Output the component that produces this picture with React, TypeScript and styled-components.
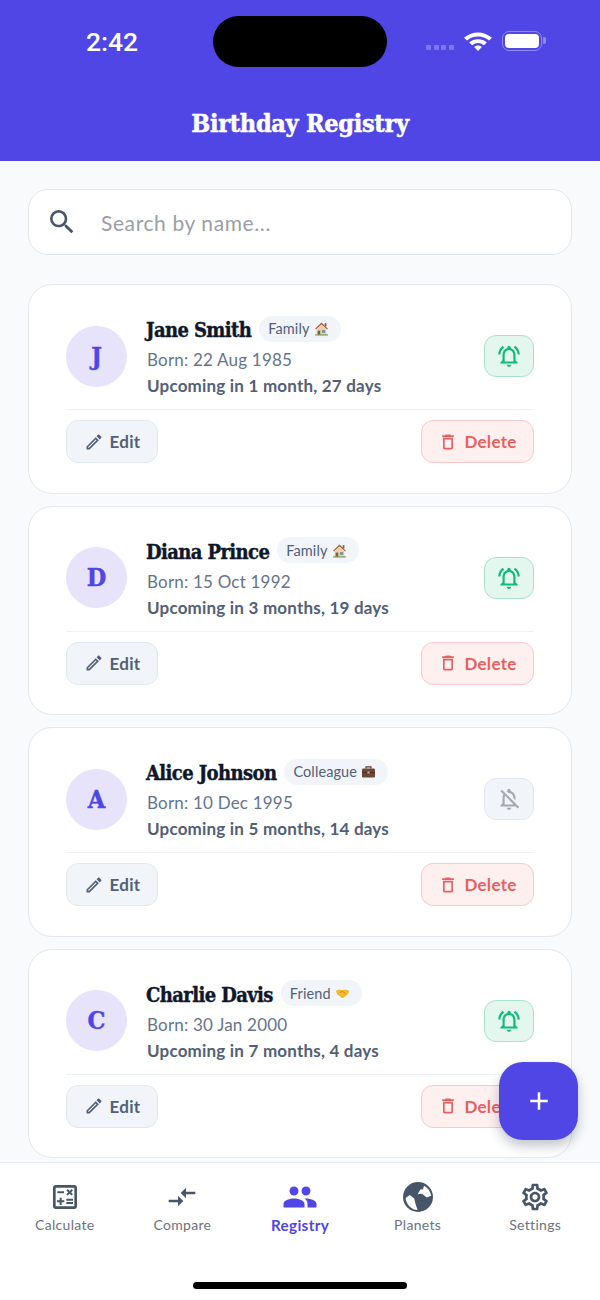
import React from 'react';
import styled, { createGlobalStyle } from 'styled-components';
import {
  MdAdd,
  MdCompareArrows,
  MdOutlineCalculate,
  MdOutlineDelete,
  MdOutlineEdit,
  MdOutlineNotificationsActive,
  MdOutlineNotificationsOff,
  MdOutlineSettings,
  MdPeople,
  MdSearch,
} from 'react-icons/md';

const HouseEmoji = () => (
  <svg width="15" height="15" viewBox="0 0 14 14">
    <path d="M7 1.5 1 7.2l.8.8L7 3.2 12.2 8l.8-.8z" fill="#a5603a" />
    <rect x="10" y="2" width="1.6" height="3" fill="#8d5a3c" />
    <path d="M2.5 7.4 7 3.4l4.5 4V13h-9z" fill="#e8d2ae" />
    <rect x="3.4" y="9" width="2.4" height="4" fill="#7d5a44" />
    <rect x="7.4" y="8.6" width="3" height="2.4" fill="#6f8fa8" />
    <rect x="1" y="12.4" width="12" height="1.2" fill="#7fa05e" />
  </svg>
);

const BriefcaseEmoji = () => (
  <svg width="15" height="15" viewBox="0 0 15 14">
    <path d="M5 4V2.4h5V4" fill="none" stroke="#5b3a2c" strokeWidth="1.2" />
    <rect x="1" y="4" width="13" height="9" rx="1.2" fill="#6d4636" />
    <rect x="1" y="7.6" width="13" height="1" fill="#4a2d22" />
    <rect x="6.4" y="7" width="2.2" height="2" fill="#d9b48a" />
  </svg>
);

const HandshakeEmoji = () => (
  <svg width="15" height="15" viewBox="0 0 15 14">
    <path d="M.8 4.2 4.4 3l3 .8L10.6 3l3.6 1.2-1 3.4L8 11.4H7L2 7.6z" fill="#f5b82e" />
    <path d="M5 6.2 7.4 4.6l3.2 2.6" fill="none" stroke="#c98a12" strokeWidth="1" />
  </svg>
);

const WifiIcon = () => (
  <svg width="28" height="20" viewBox="0 0 28 22" preserveAspectRatio="none">
    <path d="M0 7.4a20 20 0 0 1 28 0l-3 3a15.8 15.8 0 0 0-22 0z" fill="#fff" />
    <path d="M5.2 12.6a12.6 12.6 0 0 1 17.6 0l-3 3a8.4 8.4 0 0 0-11.6 0z" fill="#fff" />
    <path d="M10.2 17.6a5.4 5.4 0 0 1 7.6 0L14 22z" fill="#fff" />
  </svg>
);

const GlobeIcon = () => (
  <svg width="30" height="30" viewBox="3 3 30 30">
    <circle cx="18" cy="18" r="15" fill="#475569" />
    <path d="M5.6 19 9.8 16l4.4 3.4 1.2 5.2 2.2 6.4C11 30.6 6.2 25.6 5.6 19z" fill="#fff" />
    <path d="M24 6.8c3.8 2 6.4 5.6 7.2 10l-4.6 1.6-4.4-3.6-4.6.4 2.8-4.6 2.6-.4z" fill="#fff" />
  </svg>
);

const contacts = [
  { name: 'Jane Smith', tag: 'Family', emoji: <HouseEmoji />, born: '22 Aug 1985', upcoming: '1 month, 27 days', alert: true },
  { name: 'Diana Prince', tag: 'Family', emoji: <HouseEmoji />, born: '15 Oct 1992', upcoming: '3 months, 19 days', alert: true },
  { name: 'Alice Johnson', tag: 'Colleague', emoji: <BriefcaseEmoji />, born: '10 Dec 1995', upcoming: '5 months, 14 days', alert: false },
  { name: 'Charlie Davis', tag: 'Friend', emoji: <HandshakeEmoji />, born: '30 Jan 2000', upcoming: '7 months, 4 days', alert: true },
];

const tabs = [
  { label: 'Calculate', icon: <MdOutlineCalculate size={32} /> },
  { label: 'Compare', icon: <MdCompareArrows size={32} /> },
  { label: 'Registry', icon: <MdPeople size={36} />, active: true },
  { label: 'Planets', icon: <GlobeIcon /> },
  { label: 'Settings', icon: <MdOutlineSettings size={32} /> },
];

const App = () => {
  return (
    <Screen>
      <GlobalStyle />
      <Header>
        <StatusBar>
          <Time>2:42</Time>
          <Island />
          <StatusIcons>
            <SignalDots>
              <i />
              <i />
              <i />
              <i />
            </SignalDots>
            <WifiIcon />
            <Battery>
              <BatteryFill />
            </Battery>
          </StatusIcons>
        </StatusBar>
        <Title>Birthday Registry</Title>
      </Header>

      <Main>
        <SearchBox>
          <MdSearch size={32} color="#475569" />
          <SearchText>Search by name...</SearchText>
        </SearchBox>
        <CardList>
          {contacts.map((c) => (
            <Card key={c.name}>
              <CardTop>
                <Avatar>{c.name[0]}</Avatar>
                <Info>
                  <NameRow>
                    <Name>{c.name}</Name>
                    <Tag>
                      {c.tag} {c.emoji}
                    </Tag>
                  </NameRow>
                  <Born>Born: {c.born}</Born>
                  <Upcoming>Upcoming in {c.upcoming}</Upcoming>
                </Info>
                <BellButton $on={c.alert}>
                  {c.alert ? <MdOutlineNotificationsActive size={26} /> : <MdOutlineNotificationsOff size={26} />}
                </BellButton>
              </CardTop>
              <Actions>
                <EditButton>
                  <MdOutlineEdit size={20} />
                  Edit
                </EditButton>
                <DeleteButton>
                  <MdOutlineDelete size={20} />
                  Delete
                </DeleteButton>
              </Actions>
            </Card>
          ))}
        </CardList>
        <Fab>
          <MdAdd size={30} />
        </Fab>
      </Main>

      <TabBar>
        <Tabs>
          {tabs.map((t) => (
            <Tab key={t.label} $active={t.active}>
              <TabIcon>{t.icon}</TabIcon>
              <span>{t.label}</span>
            </Tab>
          ))}
        </Tabs>
        <HomeIndicator />
      </TabBar>
    </Screen>
  );
};

export default App;

const GlobalStyle = createGlobalStyle`
  html, body {
    margin: 0;
    padding: 0;
    background: #f8fafc;
  }
`;

const Screen = styled.div`
  width: 600px;
  height: 1300px;
  display: flex;
  flex-direction: column;
  overflow: hidden;
  background: #f8fafc;
  font-family: Lato, 'Liberation Sans', sans-serif;
`;

const Header = styled.header`
  height: 161px;
  flex: none;
  box-sizing: border-box;
  padding-top: 16px;
  background: #4f46e5;
  color: #fff;
`;

const StatusBar = styled.div`
  display: grid;
  grid-template-columns: 213px 174px 213px;
  height: 51px;
`;

const Time = styled.div`
  padding-left: 86px;
  font: 500 26.5px/51px Roboto, sans-serif;
`;

const Island = styled.div`
  height: 51px;
  border-radius: 26px;
  background: #000;
`;

const StatusIcons = styled.div`
  display: flex;
  align-items: center;
  padding-left: 39px;
  height: 49px;
`;

const SignalDots = styled.div`
  display: flex;
  gap: 2.5px;
  margin-top: 13px;
  margin-right: 10px;

  i {
    width: 5px;
    height: 5px;
    border-radius: 1px;
    background: #7d76ec;
  }
`;

const Battery = styled.div`
  position: relative;
  width: 40px;
  height: 20px;
  margin-left: 10px;
  box-sizing: border-box;
  border: 1.5px solid #8f8aef;
  border-radius: 7px;
  padding: 2px;

  &::after {
    content: '';
    position: absolute;
    right: -5px;
    top: 5px;
    width: 2.5px;
    height: 7px;
    border-radius: 0 2px 2px 0;
    background: #8f8aef;
  }
`;

const BatteryFill = styled.div`
  height: 100%;
  border-radius: 4px;
  background: #fff;
`;

const Title = styled.h1`
  margin: 40px 0 0;
  text-align: center;
  font: 700 25px/34px 'DejaVu Serif Condensed', 'DejaVu Serif', serif;
  letter-spacing: -0.3px;
  -webkit-text-stroke: 0.5px #fff;
`;

const Main = styled.main`
  position: relative;
  flex: 1;
  min-height: 0;
  overflow: hidden;
  padding: 28px 28px 0;
`;

const SearchBox = styled.div`
  height: 66px;
  box-sizing: border-box;
  display: flex;
  align-items: center;
  gap: 23px;
  padding: 0 17px;
  background: #fff;
  border: 1px solid #e2e8f0;
  border-radius: 20px;
`;

const SearchText = styled.span`
  font-size: 21px;
  letter-spacing: 0.6px;
  color: #9a9ea6;
`;

const CardList = styled.div`
  display: flex;
  flex-direction: column;
  gap: 12px;
  margin-top: 29px;
`;

const Card = styled.article`
  height: 209.6px;
  flex: none;
  box-sizing: border-box;
  padding: 26px 37px 0;
  background: #fff;
  border: 1px solid #e2e8f0;
  border-radius: 24px;
`;

const CardTop = styled.div`
  display: flex;
  align-items: center;
  height: 99px;
  box-sizing: border-box;
  padding-bottom: 8px;
  border-bottom: 1px solid #eef1f5;
`;

const Avatar = styled.div`
  width: 61px;
  height: 61px;
  flex: none;
  display: flex;
  align-items: center;
  justify-content: center;
  border-radius: 50%;
  background: #e6e3fb;
  color: #4f46e5;
  font: 700 25px 'DejaVu Serif Condensed', 'DejaVu Serif', serif;
  -webkit-text-stroke: 0.4px #4f46e5;
`;

const Info = styled.div`
  flex: 1;
  margin-left: 20px;
  margin-top: 2px;
  display: flex;
  flex-direction: column;
`;

const NameRow = styled.div`
  display: flex;
  align-items: center;
  gap: 8px;
  margin-left: -1px;
  height: 28px;
`;

const Name = styled.div`
  font: 700 20px/28px 'DejaVu Serif Condensed', 'DejaVu Serif', serif;
  letter-spacing: -0.6px;
  -webkit-text-stroke: 0.4px #0f172a;
  color: #0f172a;
`;

const Tag = styled.div`
  display: flex;
  align-items: center;
  gap: 4px;
  height: 26px;
  padding: 0 12px 0 9px;
  margin-top: -3px;
  border-radius: 13px;
  background: #f1f5f9;
  color: #526077;
  font-size: 14.5px;
  letter-spacing: 0.1px;
`;

const Born = styled.div`
  margin-top: 4px;
  font-size: 17px;
  line-height: 24px;
  letter-spacing: 0.2px;
  color: #64748b;
`;

const Upcoming = styled.div`
  margin-top: 2px;
  font-size: 17px;
  line-height: 24px;
  font-weight: 700;
  letter-spacing: 0.2px;
  color: #526077;
`;

const BellButton = styled.div<{ $on?: boolean }>`
  width: 50px;
  height: 42px;
  flex: none;
  box-sizing: border-box;
  display: flex;
  align-items: center;
  justify-content: center;
  border-radius: 12px;
  border: 1px solid ${(p) => (p.$on ? '#a7e3cb' : '#e2e8f0')};
  background: ${(p) => (p.$on ? '#e3f7ef' : '#f1f5f9')};
  color: ${(p) => (p.$on ? '#10b981' : '#a3a9b3')};
`;

const Actions = styled.div`
  display: flex;
  justify-content: space-between;
  margin-top: 10px;
`;

const ActionButton = styled.div`
  height: 43px;
  box-sizing: border-box;
  display: flex;
  align-items: center;
  justify-content: center;
  gap: 6px;
  border-radius: 12px;
  font-size: 17px;
  font-weight: 700;
  letter-spacing: 0.3px;
`;

const EditButton = styled(ActionButton)`
  width: 92px;
  background: #f1f5f9;
  border: 1px solid #e2e8f0;
  color: #526077;
`;

const DeleteButton = styled(ActionButton)`
  width: 113px;
  background: #fef0ef;
  border: 1px solid #fbc9c9;
  color: #e95f5f;
`;

const Fab = styled.div`
  position: absolute;
  right: 22px;
  top: 901px;
  width: 79px;
  height: 78px;
  display: flex;
  align-items: center;
  justify-content: center;
  border-radius: 24px;
  background: #4f46e5;
  color: #fff;
  box-shadow: 0 6px 12px rgba(15, 23, 42, 0.25);
`;

const TabBar = styled.nav`
  height: 138px;
  flex: none;
  box-sizing: border-box;
  background: #fff;
  border-top: 1px solid #e2e8f0;
  position: relative;
`;

const Tabs = styled.div`
  display: grid;
  grid-template-columns: repeat(5, 1fr);
  padding: 16px 6px 0;
`;

const Tab = styled.div<{ $active?: boolean }>`
  display: flex;
  flex-direction: column;
  align-items: center;
  font-size: ${(p) => (p.$active ? '15.3px' : '14px')};
  line-height: 20px;
  letter-spacing: 0.3px;
  font-weight: ${(p) => (p.$active ? 700 : 400)};
  color: ${(p) => (p.$active ? '#4f46e5' : '#6b7280')};

  svg {
    color: ${(p) => (p.$active ? '#4f46e5' : '#475569')};
  }
`;

const TabIcon = styled.div`
  height: 36px;
  display: flex;
  align-items: center;
  justify-content: center;
`;

const HomeIndicator = styled.div`
  position: absolute;
  left: 193px;
  bottom: 11px;
  width: 214px;
  height: 7px;
  border-radius: 4px;
  background: #000;
`;
